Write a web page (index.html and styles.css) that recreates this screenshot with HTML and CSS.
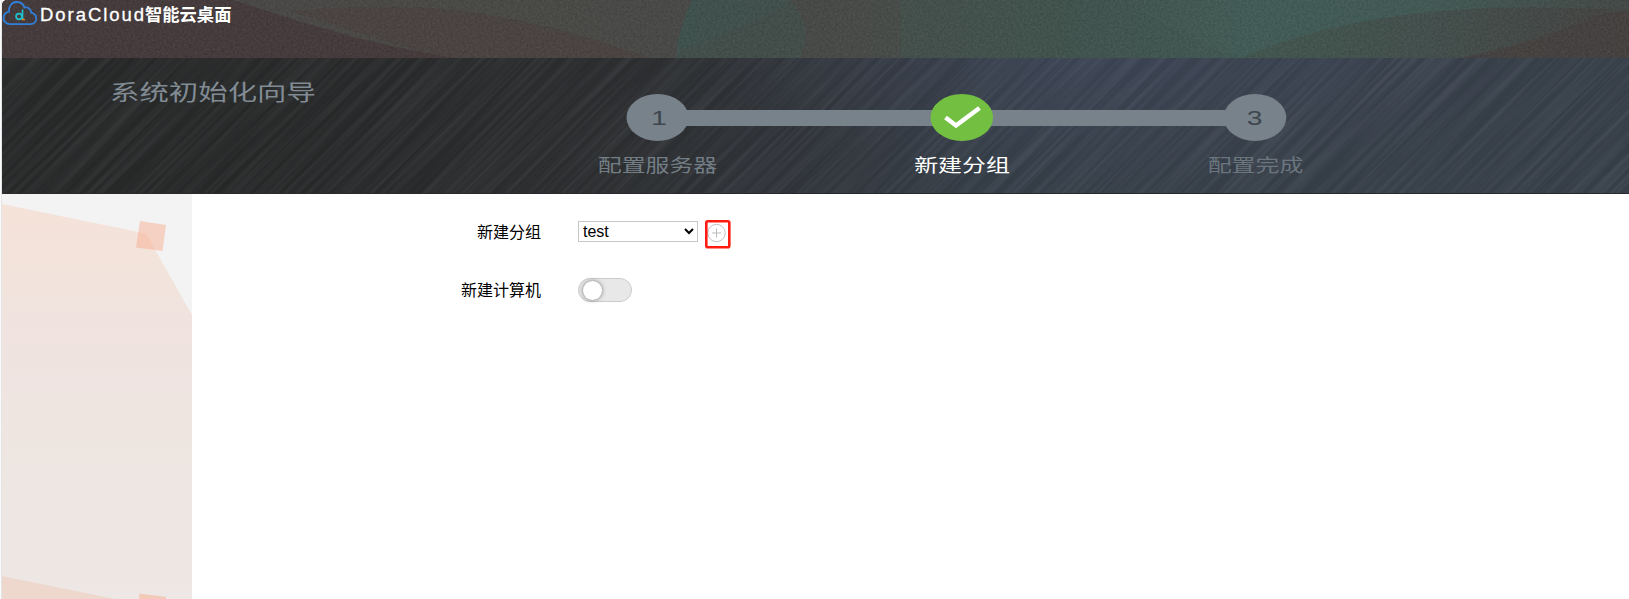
FILE: index.html
```html
<!DOCTYPE html>
<html lang="zh-CN">
<head>
<meta charset="utf-8">
<title>DoraCloud智能云桌面</title>
<link rel="stylesheet" href="styles.css">
</head>
<body>
<div class="page">
  <header class="topbar">
    <svg class="backdrop" viewBox="2 0 1627 58" preserveAspectRatio="none" aria-hidden="true">
      <defs>
        <linearGradient id="wash" gradientUnits="userSpaceOnUse" x1="2" y1="0" x2="1629" y2="0">
          <stop offset="0" stop-color="#4b4746"/><stop offset=".3" stop-color="#4a4a47"/><stop offset=".52" stop-color="#494b48"/>
          <stop offset=".64" stop-color="#43524d"/><stop offset=".77" stop-color="#425e58"/><stop offset=".88" stop-color="#425b56"/><stop offset="1" stop-color="#444947"/>
        </linearGradient>
        <linearGradient id="slope" x1="0" x2="1"><stop offset="0" stop-color="#42584f"/><stop offset=".5" stop-color="#43504d"/><stop offset="1" stop-color="#454341"/></linearGradient>
        <linearGradient id="pool" x1="0" x2="1"><stop offset="0" stop-color="#3f534f"/><stop offset="1" stop-color="#41504c"/></linearGradient>
        <filter id="grain" x="0" y="0" width="100%" height="100%" color-interpolation-filters="sRGB">
          <feTurbulence type="fractalNoise" baseFrequency=".45" numOctaves="2" seed="4"/>
          <feColorMatrix values=".9 0 0 0 -.17  .9 0 0 0 -.17  .9 0 0 0 -.17  0 0 0 0 .1"/>
        </filter>
      </defs>
      <rect x="2" width="1627" height="58" fill="url(#wash)"/>
      <path d="M290 11Q400 2 470 12Q555 24 650 58H440Z" fill="#4a4341"/>
      <path d="M2 0H232C275 12 340 39 455 58H2Z" fill="#453a3b"/>
      <path d="M692 0H790Q815 28 800 58H676Q678 28 692 0Z" fill="url(#pool)"/>
      <path d="M650 58Q730 37 795 0H830V58Z" fill="#494b48" opacity=".35"/>
      <path d="M900 0H1128Q1170 35 1240 58H900Z" fill="#415650" opacity=".45"/>
      <path d="M1240 58C1330 20 1450-2 1629 11V58Z" fill="url(#slope)"/>
      <path d="M1460 58Q1540 42 1600 14L1629 11V58Z" fill="#45413f" opacity=".85"/>
      <rect x="2" width="1627" height="58" filter="url(#grain)"/>
    </svg>
    <svg class="logo" viewBox="0 0 36 26" aria-hidden="true">
      <path d="M8 24.2C3.500 24.200 1.500 21 1.500 18C1.500 14.500 4 12.300 7 11.600C6.500 6 10 2 14.500 2C18.500 2 21.500 4 22.500 7.500C26.500 7 29 9.500 29.300 12.700C32.500 13.500 34.300 15.800 34.300 18.500C34.300 22 31.800 24.200 28.500 24.200Z" fill="none" stroke="#2f80dc" stroke-width="1.800"/>
      <circle cx="17" cy="16.500" r="2.900" fill="none" stroke="#1fc3cf" stroke-width="1.700"/>
      <path d="M20.500 9.500V19.500" stroke="#1fc3cf" stroke-width="1.700"/>
      <path d="M20 19.500H22.800" stroke="#ef8a22" stroke-width="1.600"/>
    </svg>
    <h1 class="brand"><span class="latin">DoraCloud</span><span class="han">智能云桌面</span></h1>
  </header>

  <section class="wizard">
    <svg class="banner" viewBox="2 58 1627 136" preserveAspectRatio="none">
      <defs>
        <linearGradient id="steel" gradientUnits="userSpaceOnUse" x1="300" y1="0" x2="1190" y2="0" gradientTransform="rotate(14 745 120)">
          <stop offset="0" stop-color="#282929"/><stop offset=".38" stop-color="#2d2f31"/><stop offset=".58" stop-color="#32363c"/><stop offset=".8" stop-color="#37404a"/><stop offset="1" stop-color="#38404a"/>
        </linearGradient>
        <radialGradient id="sheen" gradientUnits="userSpaceOnUse" cx="1130" cy="40" r="440" gradientTransform="translate(0 26) scale(1 .33)">
          <stop offset="0" stop-color="#48506a" stop-opacity=".4"/><stop offset="1" stop-color="#48506a" stop-opacity="0"/>
        </radialGradient>
        <filter id="streaks" x="0" y="0" width="100%" height="100%" color-interpolation-filters="sRGB">
          <feTurbulence type="fractalNoise" baseFrequency=".005 .25" numOctaves="3" seed="9"/>
          <feColorMatrix values="2.200 0 0 0 -.75  2.200 0 0 0 -.73  2.200 0 0 0 -.7  0 0 0 0 .05"/>
        </filter>
        <clipPath id="frame"><rect x="2" y="58" width="1627" height="136"/></clipPath>
      </defs>
      <rect x="2" y="58" width="1627" height="136" fill="url(#steel)"/>
      <rect x="2" y="58" width="1627" height="136" fill="url(#sheen)"/>
      <g clip-path="url(#frame)">
        <rect x="-900" y="-900" width="1900" height="1900" transform="translate(815 120) rotate(-45)" filter="url(#streaks)"/>
      </g>
      <rect x="2" y="193" width="1627" height="1" fill="#292a2e"/>
      <text class="title" transform="translate(110 100) scale(1.375 1)">系统初始化向导</text>
      <rect x="657" y="110" width="598" height="16" fill="#78828a"/>
      <ellipse cx="657.500" cy="117.500" rx="31" ry="23.500" fill="#78828a"/>
      <ellipse cx="961.800" cy="117.500" rx="31.300" ry="23.500" fill="#73bf42"/>
      <ellipse cx="1255" cy="117.500" rx="31.300" ry="23.500" fill="#78828a"/>
      <text class="number" transform="translate(659 125) scale(1.340 1)">1</text>
      <path d="M945.500 117.500L956 125.500L979.500 108" fill="none" stroke="#fff" stroke-width="4.500"/>
      <text class="number" transform="translate(1254.500 125) scale(1.340 1)">3</text>
      <text class="step" transform="translate(657.500 171.500) scale(1.330 1)">配置服务器</text>
      <text class="step current" transform="translate(962 171.500) scale(1.330 1)">新建分组</text>
      <text class="step later" transform="translate(1255.500 171.500) scale(1.330 1)">配置完成</text>
    </svg>
  </section>

  <div class="body">
    <aside class="side">
      <svg class="art" viewBox="2 194 190 405" aria-hidden="true">
        <defs>
          <linearGradient id="peach" gradientUnits="userSpaceOnUse" x1="0" y1="204" x2="0" y2="599">
            <stop offset="0" stop-color="#f5e2d9"/><stop offset=".2" stop-color="#f2e4dc"/><stop offset=".32" stop-color="#f0e3e0"/><stop offset=".65" stop-color="#eee6e1"/><stop offset="1" stop-color="#ede7e5"/>
          </linearGradient>
        </defs>
        <path d="M2 204L146 233.500L192 315V599H2Z" fill="url(#peach)"/>
        <path d="M140 221L166 225L162.500 251L136 247.500Z" fill="#f9a382" fill-opacity=".42"/>
        <path d="M2 576L115 599H2Z" fill="#eed8cd"/>
        <path d="M139.500 593.500L166 597V599H139Z" fill="#f3cab7"/>
      </svg>
    </aside>
    <main class="form">
      <div class="row">
        <label class="label" for="group">新建分组</label>
        <select class="picker" id="group"><option>test</option></select>
        <button class="add" type="button" aria-label="新建分组">
          <svg viewBox="0 0 26 29" width="26" height="29">
            <circle cx="11.500" cy="13" r="8.700" fill="#fff" stroke="#c4c4c4"/>
            <path d="M7 13H16M11.500 8.500V17.500" stroke="#bbb"/>
            <rect x="1.300" y="1.300" width="23" height="26" rx="1.500" fill="none" stroke="#ff1d12" stroke-width="2.600"/>
          </svg>
        </button>
      </div>
      <div class="row second">
        <span class="label">新建计算机</span>
        <span class="toggle"><span class="knob"></span></span>
      </div>
    </main>
  </div>
</div>
</body>
</html>
```

FILE: styles.css
```css
* { box-sizing: border-box; }
body {
  margin: 0;
  background: #fff;
  color: #000;
  font: 16px "Liberation Sans", "Noto Sans CJK SC", sans-serif;
}
.page {
  height: 599px;
  padding-left: 2px;
  display: flex;
  flex-direction: column;
  overflow: hidden;
  background: linear-gradient(90deg, #fafafa 1px, #e4e5e7 1px, #e4e5e7 2px, #fff 2px);
}
.topbar {
  position: relative;
  height: 58px;
  flex: none;
  display: flex;
  align-items: flex-start;
  overflow: hidden;
  border-top-left-radius: 5px;
}
.backdrop {
  position: absolute;
  inset: 0;
  width: 100%;
  height: 100%;
}
.logo { position: relative; width: 36px; height: 26px; flex: none; }
.brand {
  position: relative;
  margin: 3px 0 0 2px;
  display: flex;
  align-items: baseline;
  color: #fff;
  line-height: 24px;
}
.latin { width: 105px; font-size: 18.500px; font-weight: 400; letter-spacing: 1.950px; -webkit-text-stroke: .3px #fff; }
.han { font-size: 17.300px; font-weight: 700; }
.wizard { height: 136px; flex: none; }
.banner { display: block; width: 100%; height: 100%; }
.title { font: 400 21.400px "Noto Sans CJK SC", sans-serif; fill: #818b94; }
.number { font: 21px "Liberation Sans", sans-serif; fill: #3d464f; text-anchor: middle; }
.step { font: 400 18px "Noto Sans CJK SC", sans-serif; fill: #737d85; text-anchor: middle; }
.current { fill: #fff; }
.later { fill: #6b757e; }
.body { flex: 1; display: flex; min-height: 0; }
.side { width: 190px; flex: none; background: #f3f3f3; }
.art { display: block; width: 190px; height: 405px; }
.form { flex: 1; padding-top: 26px; }
.row { display: flex; align-items: flex-start; height: 58px; }
.label { width: 349px; flex: none; text-align: right; line-height: 26px; }
.picker {
  width: 120px;
  height: 21px;
  margin: 1px 0 0 37px;
  padding: 0;
  border: 1px solid #c6c6c6;
  border-radius: 0;
  background: #fff;
  font: 16px "Liberation Sans", sans-serif;
  color: #000;
}
.add { display: flex; margin-left: 7px; padding: 0; border: 0; background: none; }
.toggle {
  display: flex;
  align-items: center;
  width: 54px;
  height: 24px;
  margin: 0 0 0 37px;
  padding-left: 4px;
  border: 1px solid #ccc;
  border-radius: 12px;
  background: #e8e8e8;
}
.knob { width: 19px; height: 19px; border-radius: 50%; background: #fff; box-shadow: 0 0 4px rgba(0, 0, 0, .5); }
```
